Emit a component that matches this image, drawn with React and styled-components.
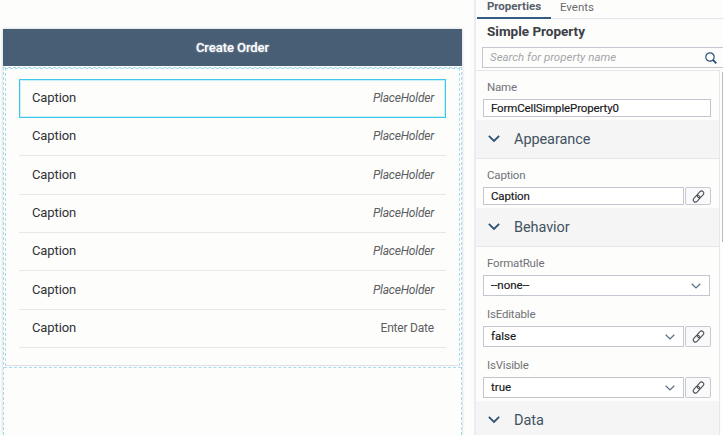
import React from "react";
import styled, { createGlobalStyle, css } from "styled-components";

const Global = createGlobalStyle`
  * { box-sizing: border-box; }
  body { margin: 0; background: #fdfdfc; overflow: hidden; font-family: Roboto, "Liberation Sans", sans-serif; }
`;

const Page = styled.div`
  display: flex;
  width: 723px;
  height: 435px;
  overflow: hidden;
`;

const Canvas = styled.main`
  width: 474px;
  padding: 29px 11px 0 3px;
`;

const Phone = styled.section`
  width: 459px;
  height: 406px;
  box-shadow: 0 0 3px rgba(80, 90, 110, 0.28);
`;

const PageBar = styled.header`
  height: 37px;
  line-height: 38px;
  text-align: center;
  background: #475e75;
  color: #fff;
  font-size: 13px;
  font-weight: 500;
  letter-spacing: -0.05px;
  text-shadow: 0 0 2px rgba(255, 255, 255, 0.6);
`;

const DropArea = styled.div`
  margin-top: 1px;
  height: 368px;
  border: 1px dashed #a9daee;
  border-bottom: 0;
`;

const FormSection = styled.div`
  height: 298px;
  margin: 0 1px;
  padding: 10px 13px 0 13px;
  border: 1px dashed #a9daee;
  border-bottom: 1px solid #dcdee4;
`;

const NextDrop = styled.div`
  border-top: 1px dashed #a9daee;
  margin-top: 1px;
`;

const Cell = styled.div`
  display: flex;
  align-items: center;
  justify-content: space-between;
  height: 38.35px;
  padding: 0 12px 1px 13px;
  border-bottom: 1px solid #e6e7eb;
  line-height: 16px;
  ${(p) =>
    p.$selected &&
    css`
      height: 39px;
      padding: 0 11px 2px 12px;
      border: 1px solid #3cc8ea;
      box-shadow: inset 0 0 0 1px #c9f0f9;
    `}
`;

const CellCaption = styled.span`
  font-size: 13px;
  letter-spacing: -0.1px;
  color: #303236;
`;

const CellValue = styled.span`
  font-size: 12px;
  letter-spacing: -0.2px;
  font-style: ${(p) => (p.$hint ? "italic" : "normal")};
  color: #5b5d61;
`;

const Panel = styled.aside`
  width: 249px;
  height: 435px;
  border-left: 2px solid #ebecf1;
`;

const Tabs = styled.nav`
  display: flex;
  height: 19px;
  border-bottom: 1px solid #e3e5ea;
  padding-left: 1px;
`;

const Tab = styled.button`
  width: ${(p) => (p.$active ? "74px" : "52px")};
  height: 19px;
  padding: 0 0 6px;
  border: 0;
  border-bottom: ${(p) => (p.$active ? "2px solid #345c82" : "0")};
  background: none;
  font-family: inherit;
  font-size: 11.5px;
  line-height: ${(p) => (p.$active ? "12px" : "10px")};
  font-weight: ${(p) => (p.$active ? 700 : 400)};
  color: ${(p) => (p.$active ? "#56606b" : "#6a6d70")};
`;

const PanelTitle = styled.h2`
  margin: 0;
  height: 28px;
  padding-left: 11px;
  font-size: 13.5px;
  line-height: 24px;
  font-weight: 700;
  color: #3c4045;
`;

const SearchBox = styled.div`
  display: flex;
  align-items: center;
  justify-content: space-between;
  height: 21px;
  margin-left: 6px;
  padding: 0 6px 0 7px;
  border: 1px solid #c3c7ce;
  border-right: 0;
  font-size: 11.5px;
  line-height: 15px;
  font-style: italic;
  color: #a4a6aa;
`;

const PanelBody = styled.div`
  display: flex;
  justify-content: space-between;
  height: 365px;
  margin-top: 2px;
`;

const Groups = styled.div`
  width: 244px;
  height: 365px;
  overflow: hidden;
  border-top: 1px solid #e6e7ec;
  border-right: 1px solid #e6e7ec;
`;

const ScrollThumb = styled.div`
  width: 1px;
  height: 170px;
  margin-top: 2px;
  background: #b9bbc3;
`;

const Group = styled.div`
  padding: 7px 8px 3px 7px;
`;

const FieldLabel = styled.label`
  display: block;
  height: 21px;
  padding-left: 4px;
  font-size: 11.5px;
  line-height: 19px;
  letter-spacing: -0.18px;
  color: #717377;
`;

const FieldRow = styled.div`
  display: flex;
  gap: 1px;
  height: ${(p) => (p.$select ? "21px" : "18px")};
  margin-bottom: ${(p) => (p.$gap ? "9px" : "0")};
  margin-right: ${(p) => (p.$narrow ? "1px" : "0")};
`;

const Field = styled.div`
  flex: 1;
  display: flex;
  align-items: center;
  justify-content: space-between;
  padding: 0 8px 0 7px;
  border: 1px solid #c3c6ce;
  background: #fff;
  font-size: 11.5px;
  letter-spacing: ${(p) => (p.$select ? "0" : "-0.14px")};
  line-height: 14px;
  color: #17181a;
  -webkit-text-stroke: 0.15px #17181a;
`;

const Value = styled.span`
  padding-bottom: ${(p) => (p.$select ? "2px" : "0")};
`;

const LinkButton = styled.button`
  display: flex;
  align-items: center;
  justify-content: center;
  width: 26px;
  padding: 0;
  border: 1px solid #c7cad1;
  border-radius: 2px;
  background: #fafafc;
`;

const GroupBar = styled.div`
  display: flex;
  align-items: center;
  gap: 14px;
  height: 39px;
  padding: 2px 0 0 12px;
  background: #f5f5f6;
  border-bottom: 1px solid #e6e7eb;
  font-size: 14.5px;
  line-height: 18px;
  letter-spacing: -0.08px;
  color: #43525f;

  svg {
    margin-bottom: 2px;
  }
`;

const Chevron = ({ w = 10, color = "#5a6c7e", stroke = 1.2 }) => (
  <svg width={w} height={w * 0.6} viewBox="0 0 10 6" fill="none" stroke={color} strokeWidth={stroke}>
    <path d="M.7.8 5 5 9.3.8" />
  </svg>
);

const SearchIcon = () => (
  <svg width="12" height="12" viewBox="0 0 12 12" fill="none" stroke="#2d5274">
    <circle cx="5" cy="5" r="4.2" strokeWidth="1.2" />
    <path d="m8 8 3.3 3.3" strokeWidth="1.9" />
  </svg>
);

const LinkIcon = () => (
  <svg width="13" height="13" viewBox="0 0 13 13" fill="none" stroke="#4c5157" strokeWidth="1.1">
    <rect x="4.6" y="2.2" width="7.6" height="4.3" rx="2.1" transform="rotate(-48 8.4 4.3)" />
    <rect x=".8" y="6.5" width="7.6" height="4.3" rx="2.1" transform="rotate(-48 4.6 8.7)" />
  </svg>
);

const Section = ({ title }) => (
  <GroupBar>
    <Chevron w={12} color="#2f5272" stroke={1.5} />
    {title}
  </GroupBar>
);

const Property = ({ label, value, select, link, gap }) => (
  <>
    <FieldLabel>{label}</FieldLabel>
    <FieldRow $select={select} $gap={gap} $narrow={select && !link}>
      <Field $select={select}>
        <Value $select={select}>{value}</Value>
        {select && <Chevron />}
      </Field>
      {link && (
        <LinkButton aria-label={`Bind ${label}`}>
          <LinkIcon />
        </LinkButton>
      )}
    </FieldRow>
  </>
);

const cells = [...Array(6).fill("PlaceHolder"), "Enter Date"];

export default function App() {
  return (
    <Page>
      <Global />
      <Canvas>
        <Phone>
          <PageBar>Create Order</PageBar>
          <DropArea>
            <FormSection>
              {cells.map((value, i) => (
                <Cell key={i} $selected={i === 0}>
                  <CellCaption>Caption</CellCaption>
                  <CellValue $hint={i < 6}>{value}</CellValue>
                </Cell>
              ))}
            </FormSection>
            <NextDrop />
          </DropArea>
        </Phone>
      </Canvas>
      <Panel>
        <Tabs>
          <Tab $active>Properties</Tab>
          <Tab>Events</Tab>
        </Tabs>
        <PanelTitle>Simple Property</PanelTitle>
        <SearchBox>
          Search for property name
          <SearchIcon />
        </SearchBox>
        <PanelBody>
          <Groups>
            <Group>
              <Property label="Name" value="FormCellSimpleProperty0" />
            </Group>
            <Section title="Appearance" />
            <Group>
              <Property label="Caption" value="Caption" link />
            </Group>
            <Section title="Behavior" />
            <Group>
              <Property label="FormatRule" value="--none--" select gap />
              <Property label="IsEditable" value="false" select link gap />
              <Property label="IsVisible" value="true" select link />
            </Group>
            <Section title="Data" />
          </Groups>
          <ScrollThumb />
        </PanelBody>
      </Panel>
    </Page>
  );
}
